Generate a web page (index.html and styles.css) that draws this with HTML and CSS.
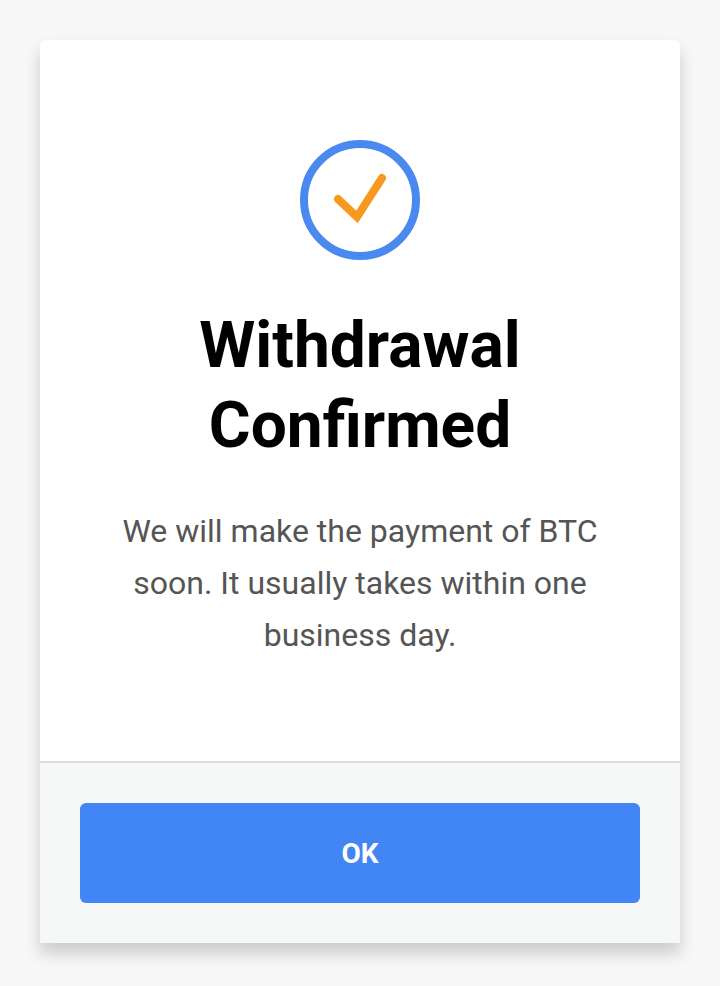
FILE: index.html
```html
<!DOCTYPE html>
<html lang="en">

<head>
  <meta charset="UTF-8" />
  <title>Withdrawal Confirmed</title>
  <link rel="stylesheet" href="styles.css">
</head>

<body>

  <div class="dialog">
    <div class="dialog-body">
      <svg class="icon-check" width="120" height="120" viewBox="0 0 120 120">
        <circle cx="60" cy="60" r="56" fill="none" stroke="#4a8af0" stroke-width="8" />
        <path d="M38 59 L57 77 L82 38" fill="none" stroke="#f7981f" stroke-width="8" stroke-linecap="round" stroke-linejoin="miter" />
      </svg>
      <h2>Withdrawal Confirmed</h2>
      <p>We will make the payment of BTC soon. It usually takes within one business day.</p>
    </div>

    <div class="dialog-footer">
      <button class="btn-ok">OK</button>
    </div>
  </div>

</body>

</html>
```

FILE: styles.css
```css
body {
  margin: 0;
  padding: 40px 40px 0;
  height: 986px;
  box-sizing: border-box;
  background: #f7f7f7;
  font-family: Roboto, sans-serif;
}

.dialog {
  background: white;
  border-radius: 6px 6px 0 0;
  box-shadow: 0 10px 16px rgba(0, 0, 0, 0.18);
  overflow: hidden;
}

.dialog-body {
  height: 721px;
  box-sizing: border-box;
  padding-top: 100px;
  text-align: center;
}

.icon-check {
  display: block;
  margin: 0 auto;
}

h2 {
  width: 400px;
  margin: 46px auto 0;
  font-size: 64px;
  line-height: 80px;
  font-weight: 700;
  color: black;
}

p {
  width: 500px;
  margin: 39px auto 0;
  font-size: 32px;
  line-height: 52px;
  color: #555555;
}

.dialog-footer {
  height: 182px;
  box-sizing: border-box;
  padding: 40px;
  background: #f6f7f7;
  border-top: 2px solid #dcdcdc;
}

.btn-ok {
  display: block;
  width: 100%;
  height: 100px;
  background: #4285f4;
  color: white;
  border: none;
  border-radius: 6px;
  font-family: Roboto, sans-serif;
  font-size: 28px;
  font-weight: 700;
}
```
